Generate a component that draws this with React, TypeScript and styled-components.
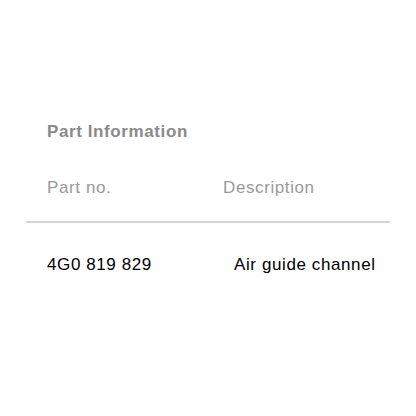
import styled, { createGlobalStyle } from "styled-components";

const GlobalStyle = createGlobalStyle`
  body {
    margin: 0;
    background: #fff;
    font-family: "Liberation Sans", Arial, sans-serif;
  }
`;

const Panel = styled.div`
  width: 416px;
  height: 416px;
  padding: 120px 26px 0 26px;
  box-sizing: border-box;
`;

const Title = styled.div`
  padding-left: 21px;
  font-size: 17px;
  letter-spacing: 0.6px;
  font-weight: bold;
  color: #8a8a8a;
  line-height: 24px;
`;

const Row = styled.div<{ $head?: boolean }>`
  display: grid;
  grid-template-columns: 176px 1fr;
  padding: ${(p) => (p.$head ? "34px 0 23px 21px" : "32px 0 0 21px")};
  line-height: 20px;
  border-bottom: ${(p) => (p.$head ? "2px solid #d6d6d6" : "none")};
`;

const Cell = styled.div<{ $head?: boolean; $indent?: number }>`
  font-size: 17px;
  letter-spacing: 0.6px;
  color: ${(p) => (p.$head ? "#9a9a9a" : "#000")};
  padding-left: ${(p) => p.$indent ?? 0}px;
  white-space: nowrap;
`;

export default function App() {
  return (
    <>
      <GlobalStyle />
      <Panel>
        <Title>Part Information</Title>
        <Row $head>
          <Cell $head>Part no.</Cell>
          <Cell $head>Description</Cell>
        </Row>
        <Row>
          <Cell>4G0 819 829</Cell>
          <Cell $indent={11}>Air guide channel</Cell>
        </Row>
      </Panel>
    </>
  );
}
